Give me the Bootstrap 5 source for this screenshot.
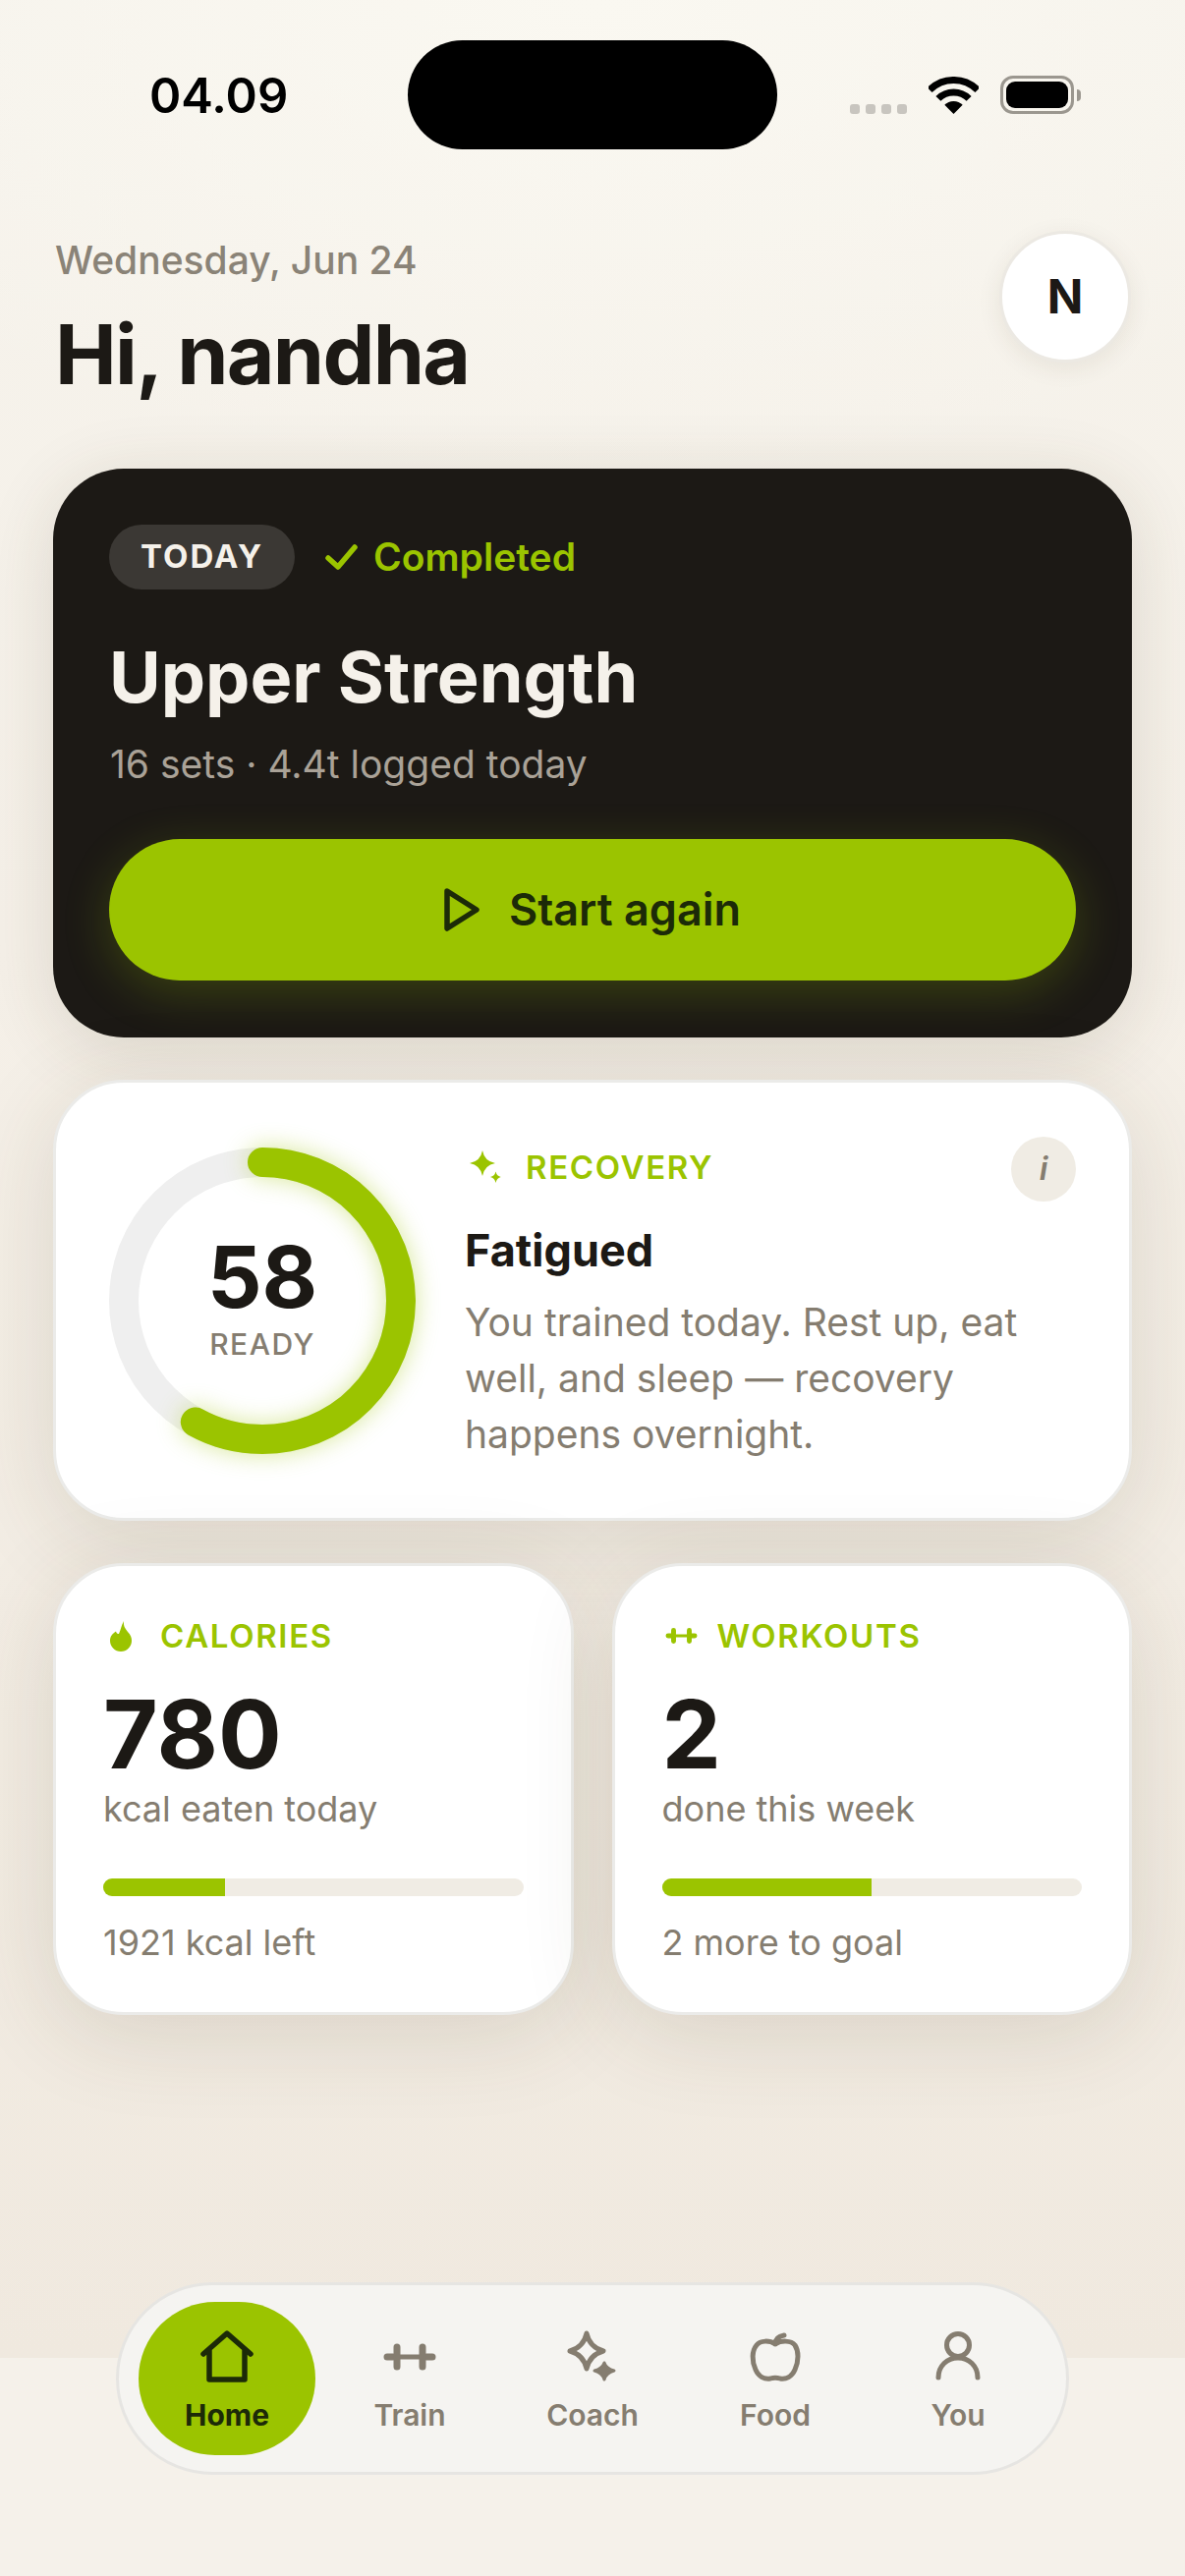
<!DOCTYPE html>
<html lang="en">
<head>
<meta charset="utf-8">
<title>Home</title>
<link href="https://cdn.jsdelivr.net/npm/bootstrap@5.3.0/dist/css/bootstrap.min.css" rel="stylesheet">
<style>
:root{--lime:#9bc400;--ink:#1c1915;--mute:#857d70;--ongreen:#1c2a08}
html,body{margin:0;background:#f5f1ea}
body{font-family:"Inter","Liberation Sans",sans-serif;color:var(--ink);font-optical-sizing:none}
.phone{position:relative;width:1206px;height:2622px;overflow:hidden;background:#f5f1ea}
.view{height:2400px;overflow:hidden;padding:0 54px;background:radial-gradient(900px 500px at 50% 0,#faf8f1 0,rgba(250,248,241,0) 100%),linear-gradient(180deg,#f6f3ec 0,#f5f0e8 40%,#f0e9df 100%)}
.statusbar{height:152px;padding-top:41px;margin:0 -54px}
.clock{width:415px;padding-left:152px;font-size:49px;font-weight:600;line-height:1;color:#000;margin-top:2px}
.island{width:376px;height:111px;border-radius:56px;background:#000}
.sysicons{flex:1 1 0;padding-left:74px;gap:22px;height:111px}
.dots{gap:6px;align-self:flex-end;margin-bottom:36px}
.dots i{display:block;width:10px;height:10px;border-radius:3px;background:#c8c5bf}
.batt{position:relative;width:75px;height:39px;border:3px solid #9b978f;border-radius:13px;padding:3px}
.batt i{display:block;height:100%;background:#000;border-radius:9px}
.batt:after{content:"";position:absolute;right:-10px;top:11px;width:4px;height:12px;background:#9b978f;border-radius:0 4px 4px 0}
.greet{padding-top:85px;height:325px}
.dateline{font-size:39px;font-weight:500;line-height:52px;color:#8a8377;margin-left:2px;margin-top:2px}
.hello{font-size:84px;font-weight:700;line-height:100px;margin:20px 0 0 2px;letter-spacing:-1.68px}
.avatar{width:134px;height:134px;background:#fff;border:3px solid #ece9e3;font-size:48px;font-weight:700;margin-right:1px;box-shadow:0 6px 24px rgba(70,55,25,.08);margin-top:-2px}
.hero.card{background:#1c1915;border:0;border-radius:72px;height:579px;padding:57px;box-shadow:0 12px 72px rgba(70,55,25,.14);color:#f5f1ea}
.tagpill{background:#3b3834;color:#f5f1ea;height:66px;width:189px;font-size:33px;font-weight:700;letter-spacing:2px;padding:0;display:flex;align-items:center;justify-content:center}
.done{color:var(--lime);font-size:39px;font-weight:600;gap:16px;margin-left:31px}
.herotitle{font-size:72px;font-weight:700;line-height:88px;margin:45px 0 0}
.herosub{font-size:39px;line-height:56px;color:#aaa297;margin:17px 0 0 1px}
.startbtn.btn{--bs-btn-bg:var(--lime);--bs-btn-hover-bg:var(--lime);--bs-btn-color:var(--ongreen);--bs-btn-border-width:0;height:144px;width:100%;margin-top:48px;border-radius:72px;font-size:45px;font-weight:600;gap:30px;box-shadow:0 12px 48px rgba(155,196,0,.24)}
.panel.card{background:#fff;border:3px solid #ebebe9;border-radius:72px;box-shadow:0 18px 96px rgba(70,55,25,.14)}
.recovery.card{height:449px;margin-top:43px;padding:66px 54px 0;flex-direction:row}
.ringbox{position:relative;width:312px;height:312px;flex:none}
.ringbox svg{display:block;overflow:visible}
.ringlabel{position:absolute;inset:0;display:flex;flex-direction:column;align-items:center;justify-content:center}
.ringnum{font-size:87px;font-weight:700;line-height:1;margin-top:-6px}
.ringcap{font-size:30px;font-weight:500;color:var(--mute);letter-spacing:1.5px;line-height:36px;margin-top:7px}
.recobody{flex:1;margin-left:50px;position:relative}
.eyebrow{color:var(--lime);font-size:33px;font-weight:600;line-height:40px;letter-spacing:1.65px}
.infodot{position:absolute;right:0;top:-11px;width:66px;height:66px;background:#f0ece4;color:var(--mute);font-style:italic;font-weight:600;font-size:33px}
.recotitle{font-size:45px;font-weight:700;line-height:58px;margin:36px 0 0}
.recotext{font-size:39px;line-height:57px;color:var(--mute);margin:15px 0 0}
.stats{display:grid;grid-template-columns:1fr 1fr;gap:39px;margin-top:43px}
.stat.card{height:460px;padding:51px 48px 0}
.statnum{font-size:96px;font-weight:700;line-height:96px;margin-top:32px}
.statsub{font-size:36px;line-height:44px;color:var(--mute);margin-top:6px}
.meter.progress{--bs-progress-bg:#f0ece4;--bs-progress-bar-bg:var(--lime);height:18px;border-radius:9px;margin-top:49px}
.statfoot{font-size:36px;line-height:44px;color:var(--mute);margin-top:25px}
.tabbar{position:absolute;left:118px;top:2323px;width:970px;height:196px;border-radius:98px;background:#f5f4f1;border:3px solid #e6e5e2;padding:17px 20px;gap:6px;flex-wrap:nowrap}
.tabitem.nav-link{--bs-nav-link-padding-x:0;--bs-nav-link-padding-y:0;flex:1 1 0;color:var(--mute);font-size:30px;font-weight:600;line-height:36px;border-radius:78px;display:flex;flex-direction:column;align-items:center}
.tabitem.active{background:var(--lime);color:var(--ongreen);font-weight:700}
.tabico{height:60px;margin-top:26px;margin-bottom:11px;display:flex;align-items:center;justify-content:center}
</style>
</head>
<body>
<div class="phone">
  <div class="view">
    <div class="statusbar d-flex align-items-start">
      <div class="clock align-self-center">04.09</div>
      <div class="island"></div>
      <div class="sysicons d-flex align-items-center">
        <div class="dots d-flex"><i></i><i></i><i></i><i></i></div>
        <svg width="51" height="38" viewBox="0 0 51 38"><path d="M1.1 13.6A34.5 34.5 0 0 1 49.9 13.6M9.9 22.4A22 22 0 0 1 41.1 22.4" fill="none" stroke="#000" stroke-width="7"/><path d="M25.5 38L16.3 28.8A13 13 0 0 1 34.7 28.8Z"/></svg>
        <div class="batt"><i></i></div>
      </div>
    </div>
    <header class="greet d-flex justify-content-between align-items-start">
      <div>
        <div class="dateline">Wednesday, Jun 24</div>
        <h1 class="hello">Hi, nandha</h1>
      </div>
      <div class="avatar rounded-circle d-flex align-items-center justify-content-center">N</div>
    </header>

    <section class="hero card">
      <div class="d-flex align-items-center">
        <span class="tagpill rounded-pill">TODAY</span>
        <span class="done d-inline-flex align-items-center">
          <svg width="33" height="26" viewBox="0 0 33 26"><path d="M3 14l10 9L30 3" fill="none" stroke="#9bc400" stroke-width="5.5" stroke-linecap="round" stroke-linejoin="round"/></svg>
          Completed
        </span>
      </div>
      <h2 class="herotitle">Upper Strength</h2>
      <p class="herosub">16 sets · 4.4t logged today</p>
      <button class="startbtn btn d-flex align-items-center justify-content-center" type="button">
        <svg width="36" height="44" viewBox="0 0 36 44"><path d="M3 3L33 22L3 41Z" fill="none" stroke="#1c2a08" stroke-width="5.5" stroke-linejoin="round"/></svg>
        Start again
      </button>
    </section>

    <section class="recovery panel card">
      <div class="ringbox">
        <svg width="312" height="312" viewBox="0 0 312 312">
          <circle cx="156" cy="156" r="141" fill="none" stroke="#efefef" stroke-width="30"/>
          <circle cx="156" cy="156" r="141" fill="none" stroke="#9bc400" stroke-width="30" stroke-linecap="round" stroke-dasharray="513.9 886" transform="rotate(-90 156 156)" style="filter:drop-shadow(0 0 12px rgba(155,196,0,.4))"/>
        </svg>
        <div class="ringlabel"><div class="ringnum">58</div><div class="ringcap">READY</div></div>
      </div>
      <div class="recobody">
        <div class="eyebrow d-flex align-items-center" style="gap:25px;margin-left:5px">
          <svg width="32" height="34" viewBox="0 0 32 34" fill="#9bc400"><path d="M13 0Q15 11 26 13Q15 15 13 26Q11 15 0 13Q11 11 13 0Z"/><path d="M26.5 21.5Q27.5 26 32 27Q27.5 28 26.5 33Q25.500 28 21 27Q25.500 26 26.500 21.500Z"/></svg>
          RECOVERY
        </div>
        <div class="infodot rounded-circle d-flex align-items-center justify-content-center">i</div>
        <h3 class="recotitle">Fatigued</h3>
        <p class="recotext">You trained today. Rest up, eat well, and sleep — recovery happens overnight.</p>
      </div>
    </section>

    <div class="stats">
      <section class="stat panel card">
        <div class="eyebrow d-flex align-items-center" style="gap:29px;margin-left:7px">
          <svg width="22" height="31" viewBox="0 0 22 31" fill="#9bc400"><path d="M14 0C13.500 5 15 7 18 11C21 14 22 17 22 20A11 11 0 0 1 0 20C0 15 3 12.500 6 10.500C6.500 12.500 7.500 13 9 13C11 9 11.500 4 14 0Z"/></svg>
          CALORIES
        </div>
        <div class="statnum">780</div>
        <div class="statsub">kcal eaten today</div>
        <div class="meter progress"><div class="progress-bar" style="width:29%"></div></div>
        <div class="statfoot">1921 kcal left</div>
      </section>
      <section class="stat panel card">
        <div class="eyebrow d-flex align-items-center" style="gap:20px;margin-left:3px">
          <svg width="33" height="16" viewBox="0 0 52 26"><g stroke="#9bc400" fill="none" stroke-linecap="round"><path d="M4 13h6M42 13h6" stroke-width="8"/><path d="M13 4v18M39 4v18" stroke-width="8"/><path d="M14 13h24" stroke-width="5"/></g></svg>
          WORKOUTS
        </div>
        <div class="statnum">2</div>
        <div class="statsub">done this week</div>
        <div class="meter progress"><div class="progress-bar" style="width:50%"></div></div>
        <div class="statfoot">2 more to goal</div>
      </section>
    </div>
  </div>

  <nav class="tabbar nav d-flex">
    <a class="tabitem nav-link active" href="#">
      <span class="tabico"><svg width="54" height="54" viewBox="0 0 54 54"><path d="M3 24L27 3L51 24M9 20V50H45V20" fill="none" stroke="#1c2a08" stroke-width="5.500" stroke-linecap="round" stroke-linejoin="round"/></svg></span>
      Home
    </a>
    <a class="tabitem nav-link" href="#">
      <span class="tabico"><svg width="54" height="28" viewBox="0 0 54 28"><g stroke="#857d70" fill="none" stroke-linecap="round"><path d="M4 14h6M44 14h6" stroke-width="7"/><path d="M14 4v20M40 4v20" stroke-width="7"/><path d="M15 14h24" stroke-width="5"/></g></svg></span>
      Train
    </a>
    <a class="tabitem nav-link" href="#">
      <span class="tabico"><svg width="54" height="54" viewBox="0 0 54 54"><path d="M21 3Q24 17 38 21Q24 25 21 39Q18 25 4 21Q18 17 21 3Z" fill="none" stroke="#857d70" stroke-width="5" stroke-linejoin="round"/><path d="M39 33Q41 39 49 41Q41 43 39 50Q37 43 29 41Q37 39 39 33Z" fill="#857d70" stroke="#857d70" stroke-width="3" stroke-linejoin="round"/></svg></span>
      Coach
    </a>
    <a class="tabitem nav-link" href="#">
      <span class="tabico"><svg width="54" height="54" viewBox="0 0 54 54"><path d="M27 14C21 10 12 10 8 15C3 21 3 31 7 40C10 47 16 50 22 49C25 48 29 48 32 49C38 50 44 47 47 40C51 31 51 21 47 15C43 10 33 10 27 14ZM27 14C27 9 30 6 36 5" fill="none" stroke="#857d70" stroke-width="5" stroke-linecap="round" stroke-linejoin="round"/></svg></span>
      Food
    </a>
    <a class="tabitem nav-link" href="#">
      <span class="tabico"><svg width="54" height="54" viewBox="0 0 54 54"><circle cx="27" cy="15" r="11.500" fill="none" stroke="#857d70" stroke-width="5"/><path d="M7 48C7 36 16 28 27 28C38 28 47 36 47 48" fill="none" stroke="#857d70" stroke-width="5" stroke-linecap="round"/></svg></span>
      You
    </a>
  </nav>
</div>
<script src="https://cdn.jsdelivr.net/npm/bootstrap@5.3.0/dist/js/bootstrap.bundle.min.js"></script>
</body>
</html>
